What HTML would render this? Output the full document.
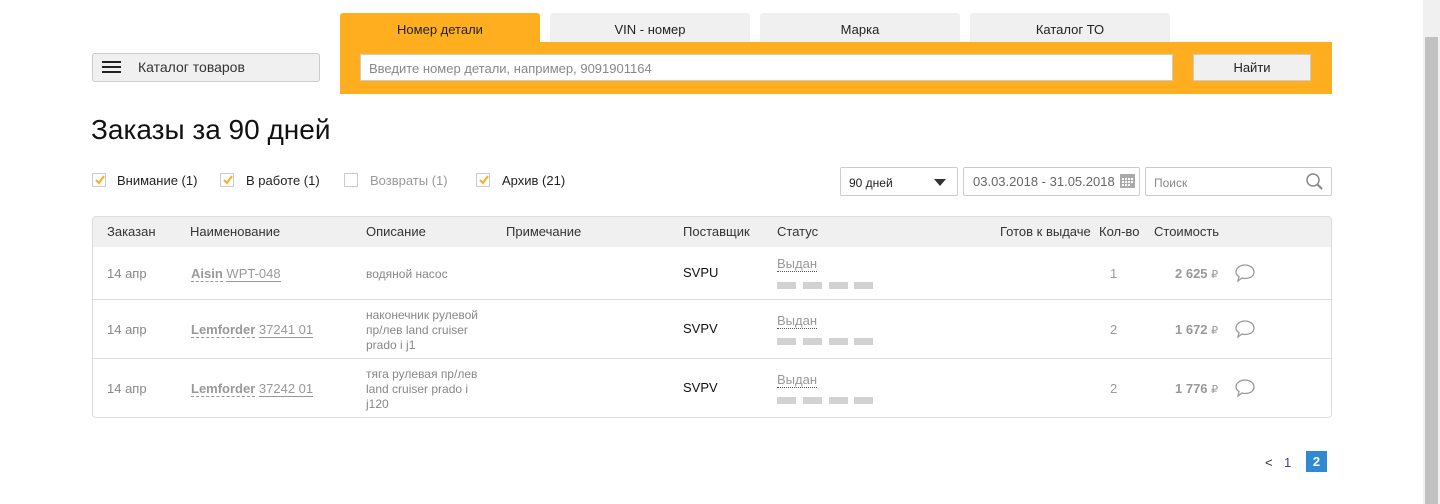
<!DOCTYPE html>
<html><head><meta charset="utf-8">
<style>
*{box-sizing:border-box;margin:0;padding:0}
body{width:1440px;height:504px;overflow:hidden;background:#fff;font-family:"Liberation Sans",Arial,sans-serif;color:#222;position:relative}
.abs{position:absolute}
.tab{position:absolute;top:13px;height:30px;width:200px;background:#f0f0f0;border-radius:3px 3px 0 0;font-size:13px;text-align:center;line-height:34px;color:#222}
.cb{position:absolute;top:173px;width:14px;height:14px;border:1px solid #ccc;background:#fff}
.cb svg{position:absolute;left:1px;top:0}
.lbl{position:absolute;top:173px;font-size:13px;color:#222}
.th{position:absolute;top:224px;font-size:13px;color:#333}
.row{position:absolute;left:93px;width:1238px;border-top:1px solid #ddd}
.c{position:absolute;font-size:12px;color:#888}
.dash{border-bottom:1px dashed #999}
.sol{border-bottom:1px solid #999;color:#999}
.blk{position:absolute;height:7px;width:19px;background:#d2d2d2}
.bub{position:absolute}
</style></head><body>
<div class="abs" style="left:92px;top:53px;width:228px;height:29px;background:#f0f0f0;border:1px solid #ccc;border-radius:3px"></div>
<div class="abs" style="left:102px;top:61px;width:19px;height:2px;background:#222"></div>
<div class="abs" style="left:102px;top:66px;width:19px;height:2px;background:#222"></div>
<div class="abs" style="left:102px;top:71px;width:19px;height:2px;background:#222"></div>
<div class="abs" style="left:138px;top:59px;font-size:14px;color:#333">Каталог товаров</div>
<div class="tab" style="left:340px;background:#ffae1f;height:32px">Номер детали</div>
<div class="tab" style="left:550px">VIN - номер</div>
<div class="tab" style="left:760px">Марка</div>
<div class="tab" style="left:970px">Каталог ТО</div>
<div class="abs" style="left:340px;top:42px;width:992px;height:52px;background:#ffae1f"></div>
<div class="abs" style="left:360px;top:54px;width:813px;height:27px;background:#fff;border:1px solid #ccc;font-size:13px;color:#888;padding:6px 0 0 8px">Введите номер детали, например, 9091901164</div>
<div class="abs" style="left:1193px;top:54px;width:118px;height:27px;background:#f0f0f0;border:1px solid #ccc;font-size:13px;text-align:center;line-height:26px">Найти</div>
<div class="abs" style="left:91px;top:114px;font-size:28px;color:#111">Заказы за 90 дней</div>
<div class="cb" style="left:92px"><svg width="12" height="12"><path d="M2 6 L5 9 L10 2" stroke="#ffae1f" stroke-width="2" fill="none"/></svg></div>
<div class="lbl" style="left:117px">Внимание (1)</div>
<div class="cb" style="left:220px"><svg width="12" height="12"><path d="M2 6 L5 9 L10 2" stroke="#ffae1f" stroke-width="2" fill="none"/></svg></div>
<div class="lbl" style="left:246px">В работе (1)</div>
<div class="cb" style="left:344px"></div>
<div class="lbl" style="left:370px;color:#999">Возвраты (1)</div>
<div class="cb" style="left:476px"><svg width="12" height="12"><path d="M2 6 L5 9 L10 2" stroke="#ffae1f" stroke-width="2" fill="none"/></svg></div>
<div class="lbl" style="left:502px">Архив (21)</div>
<div class="abs" style="left:840px;top:167px;width:118px;height:29px;border:1px solid #ccc;border-radius:2px;font-size:12px;padding:8px 0 0 8px">90 дней</div>
<div class="abs" style="left:934px;top:179px;width:0;height:0;border-left:6px solid transparent;border-right:6px solid transparent;border-top:7px solid #333"></div>
<div class="abs" style="left:963px;top:167px;width:177px;height:29px;border:1px solid #ccc;border-radius:2px;font-size:13px;color:#666;padding:6px 0 0 9px">03.03.2018 - 31.05.2018</div>
<svg class="abs" style="left:1119px;top:172px" width="17" height="17"><rect x="1" y="2" width="15" height="14" fill="#aaa"/><g fill="#fff"><rect x="3" y="6" width="2" height="2"/><rect x="6" y="6" width="2" height="2"/><rect x="9" y="6" width="2" height="2"/><rect x="12" y="6" width="2" height="2"/><rect x="3" y="9" width="2" height="2"/><rect x="6" y="9" width="2" height="2"/><rect x="9" y="9" width="2" height="2"/><rect x="12" y="9" width="2" height="2"/><rect x="3" y="12" width="2" height="2"/><rect x="6" y="12" width="2" height="2"/><rect x="9" y="12" width="2" height="2"/></g></svg>
<div class="abs" style="left:1145px;top:167px;width:187px;height:29px;border:1px solid #ccc;border-radius:2px;font-size:12px;color:#888;padding:8px 0 0 8px">Поиск</div>
<svg class="abs" style="left:1305px;top:172px" width="20" height="20"><circle cx="8" cy="8" r="6" stroke="#888" stroke-width="1.5" fill="none"/><path d="M12.5 12.5 L17 17" stroke="#888" stroke-width="2"/></svg>
<div class="abs" style="left:92px;top:216px;width:1240px;height:202px;border:1px solid #ddd;border-radius:4px;overflow:hidden">
 <div style="height:30px;background:#f0f0f0"></div>
</div>
<div class="th" style="left:107px">Заказан</div>
<div class="th" style="left:190px">Наименование</div>
<div class="th" style="left:366px">Описание</div>
<div class="th" style="left:506px">Примечание</div>
<div class="th" style="left:683px">Поставщик</div>
<div class="th" style="left:777px">Статус</div>
<div class="th" style="left:1000px">Готов к выдаче</div>
<div class="th" style="left:1099px">Кол-во</div>
<div class="th" style="left:1154px">Стоимость</div>
<div class="row" style="top:299px"></div>
<div class="row" style="top:358px"></div>

<div class="c" style="left:107px;top:266px;font-size:13px">14 апр</div>
<div class="c" style="left:191px;top:266px;font-size:13px"><b class="dash" style="color:#999">Aisin</b> <span class="sol">WPT-048</span></div>
<div class="c" style="left:366px;top:267px">водяной насос</div>
<div class="c" style="left:683px;top:265px;font-size:13px;color:#111">SVPU</div>
<div class="c" style="left:777px;top:257px;font-size:13px;color:#999;border-bottom:1px dotted #555;line-height:14px">Выдан</div>
<div class="blk" style="left:777px;top:282px"></div><div class="blk" style="left:803px;top:282px"></div><div class="blk" style="left:829px;top:282px"></div><div class="blk" style="left:854px;top:282px"></div>
<div class="c" style="left:1110px;top:266px;font-size:13px;color:#999">1</div>
<div class="c" style="left:1175px;top:266px;font-size:13px;color:#999;font-weight:bold">2 625 <span style="font-weight:normal;font-size:11px">₽</span></div>

<div class="c" style="left:107px;top:322px;font-size:13px">14 апр</div>
<div class="c" style="left:191px;top:322px;font-size:13px"><b class="dash" style="color:#999">Lemforder</b> <span class="sol">37241 01</span></div>
<div class="c" style="left:366px;top:308px;line-height:15px">наконечник рулевой<br>пр/лев land cruiser<br>prado i j1</div>
<div class="c" style="left:683px;top:321px;font-size:13px;color:#111">SVPV</div>
<div class="c" style="left:777px;top:314px;font-size:13px;color:#999;border-bottom:1px dotted #555;line-height:14px">Выдан</div>
<div class="blk" style="left:777px;top:338px"></div><div class="blk" style="left:803px;top:338px"></div><div class="blk" style="left:829px;top:338px"></div><div class="blk" style="left:854px;top:338px"></div>
<div class="c" style="left:1110px;top:322px;font-size:13px;color:#999">2</div>
<div class="c" style="left:1175px;top:322px;font-size:13px;color:#999;font-weight:bold">1 672 <span style="font-weight:normal;font-size:11px">₽</span></div>

<div class="c" style="left:107px;top:381px;font-size:13px">14 апр</div>
<div class="c" style="left:191px;top:381px;font-size:13px"><b class="dash" style="color:#999">Lemforder</b> <span class="sol">37242 01</span></div>
<div class="c" style="left:366px;top:367px;line-height:15px">тяга рулевая пр/лев<br>land cruiser prado i<br>j120</div>
<div class="c" style="left:683px;top:380px;font-size:13px;color:#111">SVPV</div>
<div class="c" style="left:777px;top:373px;font-size:13px;color:#999;border-bottom:1px dotted #555;line-height:14px">Выдан</div>
<div class="blk" style="left:777px;top:397px"></div><div class="blk" style="left:803px;top:397px"></div><div class="blk" style="left:829px;top:397px"></div><div class="blk" style="left:854px;top:397px"></div>
<div class="c" style="left:1110px;top:381px;font-size:13px;color:#999">2</div>
<div class="c" style="left:1175px;top:381px;font-size:13px;color:#999;font-weight:bold">1 776 <span style="font-weight:normal;font-size:11px">₽</span></div>

<svg class="bub" style="left:1235px;top:263px" width="22" height="20"><path d="M10 2 C15 2 19 5 19 9 C19 13 15 15.5 10 15.5 C9 15.5 8 15.3 7 15 L3 18 L4 13.5 C2 12.3 1 10.8 1 9 C1 5 5 2 10 2 Z" stroke="#999" stroke-width="1.3" fill="none"/></svg>
<svg class="bub" style="left:1235px;top:319px" width="22" height="20"><path d="M10 2 C15 2 19 5 19 9 C19 13 15 15.5 10 15.5 C9 15.5 8 15.3 7 15 L3 18 L4 13.5 C2 12.3 1 10.8 1 9 C1 5 5 2 10 2 Z" stroke="#999" stroke-width="1.3" fill="none"/></svg>
<svg class="bub" style="left:1235px;top:378px" width="22" height="20"><path d="M10 2 C15 2 19 5 19 9 C19 13 15 15.5 10 15.5 C9 15.5 8 15.3 7 15 L3 18 L4 13.5 C2 12.3 1 10.8 1 9 C1 5 5 2 10 2 Z" stroke="#999" stroke-width="1.3" fill="none"/></svg>

<div class="abs" style="left:1265px;top:455px;font-size:13px;color:#333">&lt;</div>
<div class="abs" style="left:1284px;top:455px;font-size:13px;color:#446">1</div>
<div class="abs" style="left:1306px;top:451px;width:21px;height:21px;background:#2f8ad3;color:#fff;font-size:13px;font-weight:bold;text-align:center;line-height:21px">2</div>

<div class="abs" style="left:1423px;top:0;width:17px;height:504px;background:#f0f0f0"></div>
<div class="abs" style="left:1425px;top:37px;width:13px;height:467px;background:#c1c1c1"></div>
</body></html>
